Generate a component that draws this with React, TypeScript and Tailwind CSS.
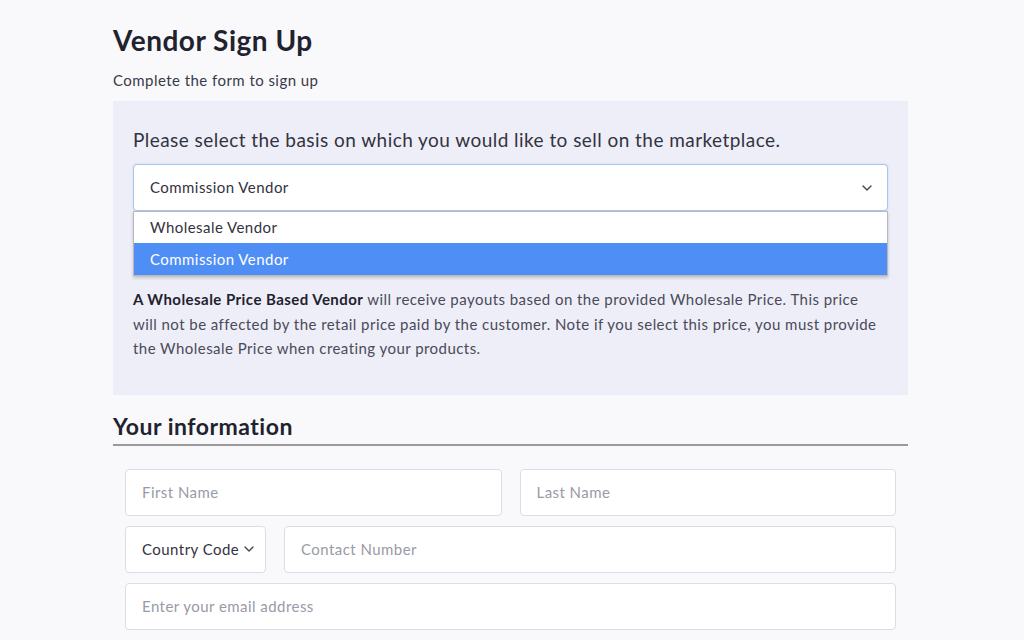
import React from 'react';
import { ChevronDown } from 'lucide-react';

const font = { fontFamily: 'Lato, "Noto Sans", sans-serif' };

const Field: React.FC<{ placeholder: string; className?: string }> = ({ placeholder, className = '' }) => (
  <div
    className={`h-[47px] bg-white border border-[#dcdce6] rounded-[4px] flex items-center px-4 text-[15px] text-[#9a9aa6] ${className}`}
  >
    {placeholder}
  </div>
);

const App: React.FC = () => {
  return (
    <div className="min-h-screen w-full bg-[#f9f9fc] text-[#22222e] tracking-[0.45px]" style={font}>
      <div className="w-[795px] ml-[113px] pt-[23px]">
        <h1 className="text-[28px] font-bold leading-[34px] tracking-[0.5px] text-[#22222e]">Vendor Sign Up</h1>
        <p className="mt-[13px] text-[15px] leading-[20px] text-[#3a3a48]">Complete the form to sign up</p>

        {/* Basis panel */}
        <div className="mt-[11px] bg-[#eeeef8] px-[20px] pt-[26px] pb-[34px]">
          <p className="text-[19px] leading-[26px] text-[#33333f]">
            Please select the basis on which you would like to sell on the marketplace.
          </p>
          <div className="relative mt-[11px]">
            <div className="h-[47px] bg-white border border-[#a9c6ec] rounded-[4px] flex items-center justify-between pl-4 pr-3 text-[15px] text-[#33333f] shadow-[0_0_2px_#bcd3f3]">
              <span>Commission Vendor</span>
              <ChevronDown className="w-4 h-4 text-[#444]" strokeWidth={2} />
            </div>
            <div className="absolute left-0 right-0 top-[47px] z-10 bg-white border border-[#b8b8c0] shadow-[0_2px_3px_rgba(0,0,0,0.2)] text-[15px]">
              <div className="h-[31px] flex items-center px-4 text-[#33333f]">Wholesale Vendor</div>
              <div className="h-[32px] flex items-center px-4 bg-[#4f8ef5] text-white">Commission Vendor</div>
            </div>
          </div>
          <p className="mt-[76px] pr-[5px] text-[15px] leading-[24.5px] text-[#4a4a58]">
            <span className="font-bold text-[#22222e]">A Wholesale Price Based Vendor</span> will receive payouts based
            on the provided Wholesale Price. This price will not be affected by the retail price paid by the customer.
            Note if you select this price, you must provide the Wholesale Price when creating your products.
          </p>
        </div>

        {/* Your information */}
        <h2 className="mt-[16px] text-[23px] font-bold leading-[30px] tracking-[0.5px] text-[#22222e]">Your information</h2>
        <div className="mt-[3px] h-[2px] bg-[#9a9a9a]" />

        <div className="px-[12px] pt-[23px] flex flex-col gap-[10px]">
          <div className="flex gap-[18px]">
            <Field placeholder="First Name" className="flex-1" />
            <Field placeholder="Last Name" className="flex-1" />
          </div>
          <div className="flex gap-[18px]">
            <div className="w-[141px] h-[47px] bg-white border border-[#dcdce6] rounded-[4px] flex items-center justify-between pl-4 pr-[8px] text-[15px] text-[#33333f]">
              <span>Country Code</span>
              <ChevronDown className="w-4 h-4 text-[#444]" strokeWidth={2} />
            </div>
            <Field placeholder="Contact Number" className="flex-1" />
          </div>
          <Field placeholder="Enter your email address" />
        </div>
      </div>
    </div>
  );
};

export default App;
